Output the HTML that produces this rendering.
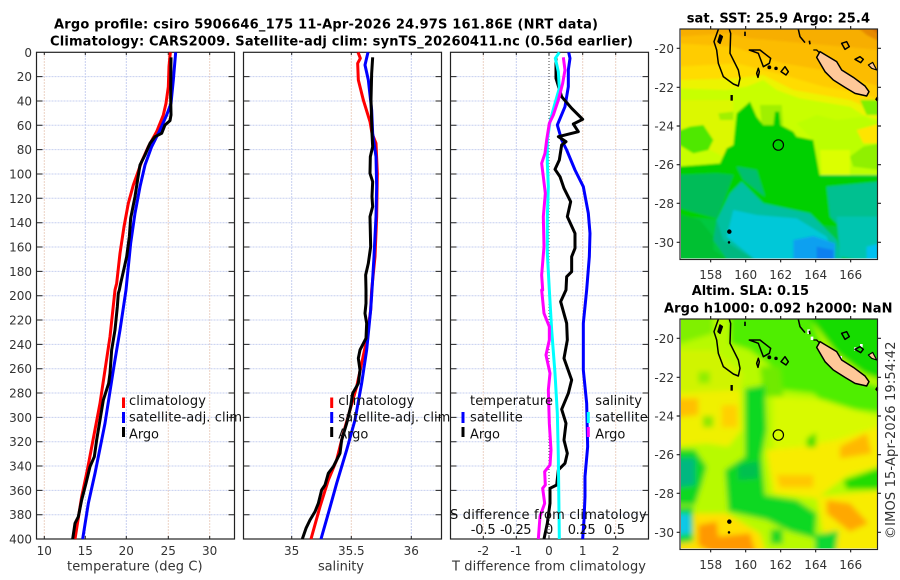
<!DOCTYPE html>
<html><head><meta charset="utf-8"><style>
html,body{margin:0;padding:0;background:#fff;width:900px;height:580px;overflow:hidden}
svg{display:block;filter:blur(.3px)}
text{font-family:"DejaVu Sans","Liberation Sans",sans-serif}
.t{font-size:12px;fill:#333}
.b{font-size:13px;font-weight:bold;fill:#000}
.l{font-size:13px;fill:#111}
.a{font-size:13px;fill:#333}
</style></head><body>
<svg width="900" height="580" viewBox="0 0 900 580" xmlns="http://www.w3.org/2000/svg">
<defs>
<filter id="bl" x="-5%" y="-5%" width="110%" height="110%"><feGaussianBlur stdDeviation="8"/></filter>
<filter id="bs" x="-2%" y="-2%" width="104%" height="104%"><feGaussianBlur stdDeviation="3"/></filter>
<clipPath id="mc"><rect x="93" y="88" width="589" height="687"/></clipPath>
<g id="hg" fill="none" stroke="#c6cff0" stroke-width="1" stroke-dasharray="2 1">
<path d="M0 76.6H198M0 101H198M0 125.3H198M0 149.6H198M0 174H198M0 198.3H198M0 222.7H198M0 247H198M0 271.4H198M0 295.7H198M0 320H198M0 344.4H198M0 368.7H198M0 393H198M0 417.4H198M0 441.7H198M0 466H198M0 490.4H198M0 514.8H198"/>
</g>
<g id="tk" fill="none" stroke="#222" stroke-width="1">
<path d="M0 76.6h6M0 101h6M0 125.3h6M0 149.6h6M0 174h6M0 198.3h6M0 222.7h6M0 247h6M0 271.4h6M0 295.7h6M0 320h6M0 344.4h6M0 368.7h6M0 393h6M0 417.4h6M0 441.7h6M0 466h6M0 490.4h6M0 514.8h6"/>
<path d="M198 76.6h-6M198 101h-6M198 125.3h-6M198 149.6h-6M198 174h-6M198 198.3h-6M198 222.7h-6M198 247h-6M198 271.4h-6M198 295.7h-6M198 320h-6M198 344.4h-6M198 368.7h-6M198 393h-6M198 417.4h-6M198 441.7h-6M198 466h-6M198 490.4h-6M198 514.8h-6"/>
<rect x="0" y="52.3" width="198" height="486.7" stroke-width="1.2"/>
</g>
<g id="coast" fill="none" stroke="#000" stroke-width="4.500" stroke-linejoin="round">
<path d="M205 88L192 125L200 150L205 190L220 230L250 252L265 258L270 235L265 210L240 160L242 100L238 88"/>
<path d="M210 105L217 110L210 130L204 125Z" fill="#000"/>
<path d="M285 95V108" stroke-width="5"/>
<path d="M298 150L330 150L362 175L358 190L340 200L325 160Z"/>
<path d="M325 205L328 215L324 232L320 220Z"/>
<circle cx="358" cy="202" r="3.5" fill="#000"/><circle cx="378" cy="205" r="3" fill="#000"/>
<path d="M393 215L405 200L415 215L408 225Z"/>
<path d="M245 285V302" stroke-width="7"/>
<path d="M445 88L450 110L465 128"/>
<path d="M478 122L480 133" stroke-width="5"/>
<path d="M490 150L500 150L508 158" stroke-width="4"/>
<path d="M500 172L510 155L535 170L560 185L575 210L610 232L645 258L657 275L650 288L615 280L585 262L550 240L525 215Z" fill="#ffc898"/>
<path d="M575 130L590 125L598 140L585 148Z"/>
<path d="M615 178L630 170L640 178L632 188Z"/>
<path d="M655 195L668 187L680 210L665 205Z" fill="#ffc898" stroke-width="3.5"/>
<path d="M678 298L682 292V302Z"/>
<circle cx="238" cy="695" r="4.5" fill="#000"/><circle cx="237" cy="727" r="1.5" fill="#000"/>
<circle cx="385" cy="435" r="15.5" stroke-width="3.5"/>
</g>
<g id="mfr" fill="none" stroke="#222" stroke-width="3.5">
<rect x="90" y="87" width="592.500" height="691.500"/>
<path d="M90 145h-10M90 262h-10M90 378h-10M90 494h-10M90 610h-10M90 727h-10M683 145h10M683 262h10M683 378h10M683 494h10M683 610h10M683 727h10M182 87v-9M287 87v-9M392 87v-9M497 87v-9M602 87v-9M182 778v9M287 778v9M392 778v9M497 778v9M602 778v9"/>
</g>
</defs>

<!-- panel grids -->
<g fill="none" stroke-width="1" stroke-dasharray="2 1">
<path stroke="#ecd2c4" d="M44.300 52V539M168.300 52V539M209.700 52V539M351.300 52V539M582.700 52V539M615.700 52V539M483.300 52V539"/>
<path stroke="#c6cff0" d="M85.300 52V539M126.300 52V539M291.700 52V539M411.300 52V539M516.300 52V539"/>
</g>
<use href="#hg" x="36.500"/><use href="#hg" x="243.500"/><use href="#hg" x="450.500"/>
<path d="M549 52V539" stroke="#444" stroke-width="1" stroke-dasharray="1 2" fill="none"/>
<use href="#tk" x="36.500"/><use href="#tk" x="243.500"/><use href="#tk" x="450.500"/>
<path d="M44.300 52v3M85.300 52v3M126.300 52v3M168.300 52v3M209.700 52v3M44.300 539v-3M85.300 539v-3M126.300 539v-3M168.300 539v-3M209.700 539v-3M291.700 52v3M351.300 52v3M411.300 52v3M291.700 539v-3M351.300 539v-3M411.300 539v-3M483.300 52v3M516.300 52v3M549 52v3M582.700 52v3M615.700 52v3M483.300 539v-3M516.300 539v-3M549 539v-3M582.700 539v-3M615.700 539v-3" stroke="#222" fill="none"/>

<!-- data curves in 3x coordinates -->
<g transform="scale(.33333)" fill="none" stroke-width="9" stroke-linejoin="round" stroke-linecap="butt">
<polyline stroke="#f00" points="511,157 507,200 505,260 498,310 490,345 470,395 445,440 425,485 400,555 385,610 372,680 360,760 350,850 345,870 330,1010 300,1210 262,1410 245,1490 225,1617"/>
<polyline stroke="#00f" points="527,157 520,240 513,310 500,345 480,390 455,440 435,495 420,560 405,640 392,730 380,850 378,870 360,990 340,1110 315,1270 285,1420 265,1510 248,1617"/>
<polyline stroke="#000" points="513,172 512,290 513,345 510,362 495,375 485,400 465,410 450,430 435,465 420,495 412,545 405,590 398,625 392,655 388,710 380,770 370,815 362,850 358,870 355,880 352,920 345,990 335,1050 330,1120 326,1150 310,1200 300,1260 290,1320 283,1370 270,1400 258,1450 245,1500 235,1550 225,1570 218,1617"/>

<polyline stroke="#f00" points="1074,157 1081,175 1073,190 1075,240 1090,300 1110,365 1116,400 1128,430 1132,520 1130,650 1125,770 1115,870 1112,930 1100,1020 1085,1090 1070,1160 1050,1230 1030,1300 1010,1380 985,1440 960,1520 933,1617"/>
<polyline stroke="#00f" points="1104,157 1095,195 1105,240 1115,330 1118,400 1128,470 1130,560 1128,650 1122,770 1116,870 1112,930 1100,1050 1085,1150 1065,1260 1040,1350 1010,1450 985,1540 963,1617"/>
<polyline stroke="#000" points="1118,172 1115,220 1113,300 1116,400 1118,440 1111,470 1110,520 1118,545 1116,590 1118,620 1110,650 1112,740 1105,790 1097,825 1098,870 1098,910 1095,940 1100,970 1098,1015 1080,1050 1075,1075 1080,1110 1075,1150 1058,1180 1052,1220 1040,1270 1025,1320 1020,1360 1000,1400 985,1420 975,1455 965,1470 955,1510 945,1535 930,1560 918,1585 907,1617"/>

<polyline stroke="#00f" points="1706,157 1710,175 1705,210 1705,260 1695,320 1672,375 1685,420 1700,450 1725,510 1750,560 1765,640 1770,700 1768,770 1760,870 1750,970 1750,1110 1760,1210 1763,1340 1755,1430 1755,1490 1752,1560 1748,1617"/>
<polyline stroke="#000" points="1668,175 1668,235 1685,290 1715,325 1748,358 1720,372 1735,395 1675,410 1698,425 1685,435 1678,480 1665,508 1680,530 1692,565 1712,605 1702,650 1725,700 1725,745 1715,770 1715,815 1700,830 1698,870 1682,905 1700,970 1702,1020 1692,1075 1715,1140 1705,1180 1685,1228 1698,1270 1692,1320 1702,1360 1695,1390 1675,1410 1670,1455 1650,1465 1650,1510 1642,1570 1632,1617"/>
<polyline stroke="#0ff" points="1678,157 1666,175 1675,215 1678,265 1665,310 1650,365 1642,420 1642,490 1645,560 1642,650 1642,760 1648,870 1655,990 1665,1120 1672,1240 1675,1370 1678,1617"/>
<polyline stroke="#f0f" points="1690,172 1695,210 1688,250 1675,300 1660,345 1648,370 1640,420 1635,460 1625,490 1630,530 1636,580 1630,650 1632,740 1625,825 1628,870 1625,870 1632,940 1648,980 1648,1020 1638,1065 1650,1120 1645,1170 1648,1270 1653,1350 1650,1395 1634,1415 1636,1455 1628,1465 1634,1510 1620,1550 1615,1617"/>
</g>

<!-- tick labels -->
<g class="t" text-anchor="end">
<text x="32" y="56.800">0</text><text x="32" y="81">20</text><text x="32" y="105.500">40</text><text x="32" y="129.800">60</text><text x="32" y="154">80</text><text x="32" y="178.500">100</text><text x="32" y="202.800">120</text><text x="32" y="227.200">140</text><text x="32" y="251.500">160</text><text x="32" y="275.800">180</text><text x="32" y="300.200">200</text><text x="32" y="324.500">220</text><text x="32" y="348.800">240</text><text x="32" y="373.200">260</text><text x="32" y="397.500">280</text><text x="32" y="421.800">300</text><text x="32" y="446.200">320</text><text x="32" y="470.500">340</text><text x="32" y="494.800">360</text><text x="32" y="519.200">380</text><text x="32" y="543.500">400</text>
</g>
<g class="t" text-anchor="middle">
<text x="44.300" y="555">10</text><text x="85.300" y="555">15</text><text x="126.300" y="555">20</text><text x="168.300" y="555">25</text><text x="209.700" y="555">30</text>
<text x="291.700" y="555">35</text><text x="351.300" y="555">35.5</text><text x="411.300" y="555">36</text>
<text x="483.300" y="555">-2</text><text x="516.300" y="555">-1</text><text x="549" y="555">0</text><text x="582.700" y="555">1</text><text x="615.700" y="555">2</text>
</g>
<text class="a" x="67" y="570.500" textLength="135.600">temperature (deg C)</text>
<text class="a" x="318" y="570.500" textLength="46">salinity</text>
<text class="a" x="452" y="570.500" textLength="194">T difference from climatology</text>

<!-- titles -->
<text class="b" x="54" y="28.500" textLength="544">Argo profile: csiro 5906646_175 11-Apr-2026 24.97S 161.86E (NRT data)</text>
<text class="b" x="50" y="45.500" textLength="583">Climatology: CARS2009. Satellite-adj clim: synTS_20260411.nc (0.56d earlier)</text>
<text class="b" x="686.700" y="22.700" textLength="183.300">sat. SST: 25.9 Argo: 25.4</text>
<text class="b" x="691.700" y="295" textLength="117.300">Altim. SLA: 0.15</text>
<text class="b" x="664" y="312.700" textLength="228.500">Argo h1000: 0.092 h2000: NaN</text>

<!-- legends -->
<g fill="none" stroke-width="3">
<path stroke="#f00" d="M123.500 397.500v10.500M331.700 397.500v10.500"/>
<path stroke="#00f" d="M123.500 412v11M331.700 412v11M463 412v11"/>
<path stroke="#000" d="M123.500 427v10M331.700 427v10M463 427v10"/>
<path stroke="#0ff" d="M588.300 412v11"/>
<path stroke="#f0f" d="M588.300 427v10"/>
</g>
<g class="l">
<text x="129" y="405" textLength="77">climatology</text>
<text x="129" y="421.700" textLength="113">satellite-adj. clim</text>
<text x="129" y="438.500" textLength="30">Argo</text>
<text x="338.300" y="405" textLength="76">climatology</text>
<text x="338.300" y="421.700" textLength="112">satellite-adj. clim</text>
<text x="338.300" y="438.500" textLength="30">Argo</text>
<text x="470" y="405" textLength="83">temperature</text>
<text x="470" y="421.700" textLength="52.700">satellite</text>
<text x="470" y="438.500" textLength="30">Argo</text>
<text x="595.300" y="405" textLength="46.700">salinity</text>
<text x="595.300" y="421.700" textLength="52.400">satellite</text>
<text x="595.300" y="438.500" textLength="30">Argo</text>
<text x="450" y="519" textLength="196.700">S difference from climatology</text>
<text x="470.700" y="534" textLength="25">-0.5</text>
<text x="500" y="534" textLength="31.500">-0.25</text>
<text x="545" y="534">0</text>
<text x="567.700" y="534" textLength="28">0.25</text>
<text x="604" y="534" textLength="21">0.5</text>
</g>

<!-- map 1 -->
<g transform="translate(650,0) scale(.33333)">
<g clip-path="url(#mc)"><g filter="url(#bs)">
<rect x="80" y="80" width="610" height="710" fill="#f7ae00"/>
<polygon fill="#e68a00" points="620,80 690,80 690,125 650,105"/>
<polygon fill="#d87000" points="655,80 690,80 690,105"/>
<polygon fill="#fcbc00" points="80,110 240,100 300,115 690,150 690,300 80,300"/>
<polygon fill="#ffcc00" points="80,130 250,140 400,190 520,210 690,260 690,400 80,400"/>
<polygon fill="#ffdc00" points="80,200 260,190 400,225 520,260 640,280 690,300 690,440 80,440"/>
<polygon fill="#ecf400" points="80,240 260,235 340,225 430,270 600,300 690,340 690,530 80,530"/>
<polygon fill="#c8ff00" points="80,265 230,270 290,260 340,240 380,270 450,295 600,320 640,345 690,360 690,530 80,530"/>
<polygon fill="#dcf800" points="80,300 250,300 250,430 220,470 80,400"/>
<polygon fill="#bcff00" points="440,370 500,345 560,360 640,350 690,370 690,530 510,525 490,420"/>
<polygon fill="#ffe400" points="620,390 690,370 690,430 640,430"/>
<polygon fill="#dcff00" points="510,450 600,450 600,525 515,525"/>
<polygon fill="#90f000" points="600,470 640,440 690,430 690,510 610,500"/>
<polygon fill="#80f000" points="630,300 690,300 690,345 650,345"/>
<polygon fill="#a0f000" points="205,340 250,335 250,360 210,360"/>
<polygon fill="#a0f000" points="330,315 395,315 400,375 335,375"/>
<polygon fill="#50e800" points="80,395 120,380 160,375 190,420 175,450 130,460 80,430"/>
<rect x="80" y="525" width="610" height="265" fill="#00c840"/>
<polygon fill="#00d000" points="80,500 210,490 230,445 250,435 260,340 300,305 320,350 340,375 370,375 375,335 388,335 392,375 430,395 440,410 490,420 510,530 690,530 690,620 560,680 80,650"/>
<polygon fill="#00bc58" points="80,525 200,520 250,525 215,620 200,655 110,630 80,620"/>
<polygon fill="#00be70" points="260,500 320,510 345,590 280,540"/>
<polygon fill="#00b880" points="190,720 200,660 240,620 330,640 340,790 240,790"/>
<polygon fill="#00c0a0" points="200,660 240,580 275,545 340,610 480,640 520,680 560,720 580,790 330,790 220,720"/>
<polygon fill="#00c090" points="530,560 690,545 690,700 590,700 540,650"/>
<polygon fill="#00c4b0" points="560,650 690,650 690,790 570,770"/>
<polygon fill="#00c8d8" points="250,630 320,645 440,655 530,710 560,790 330,790 230,710"/>
<polygon fill="#00c0f0" points="650,740 690,730 690,790 650,790"/>
<polygon fill="#10a0f0" points="430,720 490,708 555,730 555,790 430,790"/>
<polygon fill="#1080f0" points="500,740 550,750 550,790 500,790"/>
<polygon fill="#00c030" points="80,640 150,660 190,710 190,750 250,790 80,790"/>
</g></g>
<use href="#coast"/><use href="#mfr"/>
</g>

<!-- map 2 -->
<g transform="translate(650,290) scale(.33333)">
<g clip-path="url(#mc)"><g filter="url(#bl)">
<rect x="50" y="50" width="680" height="780" fill="#b8fa00"/>
<polygon fill="#80f000" points="60,60 190,60 190,130 60,170"/>
<polygon fill="#50ee00" points="240,60 470,60 520,170 560,220 620,270 720,300 720,370 620,360 530,345 490,310 395,300 380,240 300,180 240,160"/>
<polygon fill="#18dc00" points="460,60 720,60 720,280 640,250 560,190"/>
<polygon fill="#70ea00" points="330,230 390,230 400,320 340,320"/>
<polygon fill="#d0f400" points="60,180 190,180 280,250 270,300 60,310"/>
<polygon fill="#90ee00" points="145,245 180,245 180,280 145,280"/>
<polygon fill="#f0f000" points="60,310 270,300 275,420 235,470 170,460 60,470"/>
<polygon fill="#ffc000" points="60,325 145,325 145,375 60,385"/>
<polygon fill="#ffd000" points="215,345 262,345 262,412 215,412"/>
<polygon fill="#90e800" points="158,378 190,378 190,412 158,412"/>
<polygon fill="#d8fa00" points="370,320 520,330 680,380 720,400 720,540 370,600"/>
<polygon fill="#f8ec00" points="350,480 460,470 560,450 720,400 720,520 600,550 500,625 370,610"/>
<polygon fill="#ffb800" points="570,470 650,430 665,490 570,505"/>
<polygon fill="#ffc800" points="380,555 490,555 490,592 390,592"/>
<polygon fill="#f8ec00" points="500,620 720,600 720,790 530,790"/>
<polygon fill="#ffa800" points="530,630 600,640 655,700 600,725 530,670"/>
<polygon fill="#20dc00" points="580,570 720,520 720,598 590,598"/>
<polygon fill="#50e000" points="470,445 498,428 498,472 470,472"/>
<polygon fill="#10d820" points="285,295 345,285 350,420 335,500 345,615 440,630 500,670 495,745 420,725 350,690 235,665 225,540 285,500"/>
<polygon fill="#00c050" points="265,525 325,515 325,565 265,570"/>
<polygon fill="#ffe000" points="110,670 230,670 330,730 360,830 60,830 60,770"/>
<polygon fill="#ff9800" points="145,705 200,695 205,740 300,730 320,800 205,800 145,765"/>
<polygon fill="#10d820" points="60,478 135,478 170,530 155,585 135,645 60,645"/>
<polygon fill="#00b880" points="60,505 135,505 135,585 60,595"/>
<polygon fill="#10d830" points="60,650 130,650 130,755 60,765"/>
<polygon fill="#10c8e8" points="60,672 120,672 124,730 60,738"/>
<polygon fill="#20d820" points="362,718 398,718 398,762 362,762"/>
<polygon fill="#10d830" points="495,735 565,722 555,800 495,800"/>
</g></g>
<path d="M472 118h8v14h-8zM482 140h8v10h-8zM630 162h8v10h-8zM612 172h8v10h-8zM568 198h8v10h-8zM566 236h8v8h-8z" fill="#fff"/>
<use href="#coast"/><use href="#mfr"/>
</g>

<!-- map tick labels -->
<g class="t" text-anchor="end">
<text x="674" y="53">-20</text><text x="674" y="92">-22</text><text x="674" y="130.500">-24</text><text x="674" y="169.200">-26</text><text x="674" y="208">-28</text><text x="674" y="247">-30</text>
<text x="674" y="343">-20</text><text x="674" y="382">-22</text><text x="674" y="420.500">-24</text><text x="674" y="459.200">-26</text><text x="674" y="498">-28</text><text x="674" y="537">-30</text>
</g>
<g class="t" text-anchor="middle">
<text x="710.700" y="279">158</text><text x="745.700" y="279">160</text><text x="780.700" y="279">162</text><text x="815.700" y="279">164</text><text x="850.700" y="279">166</text>
<text x="710.700" y="569">158</text><text x="745.700" y="569">160</text><text x="780.700" y="569">162</text><text x="815.700" y="569">164</text><text x="850.700" y="569">166</text>
</g>
<text class="a" transform="translate(895,539) rotate(-90)" textLength="197.500">©IMOS 15-Apr-2026 19:54:42</text>
</svg>
</body></html>
